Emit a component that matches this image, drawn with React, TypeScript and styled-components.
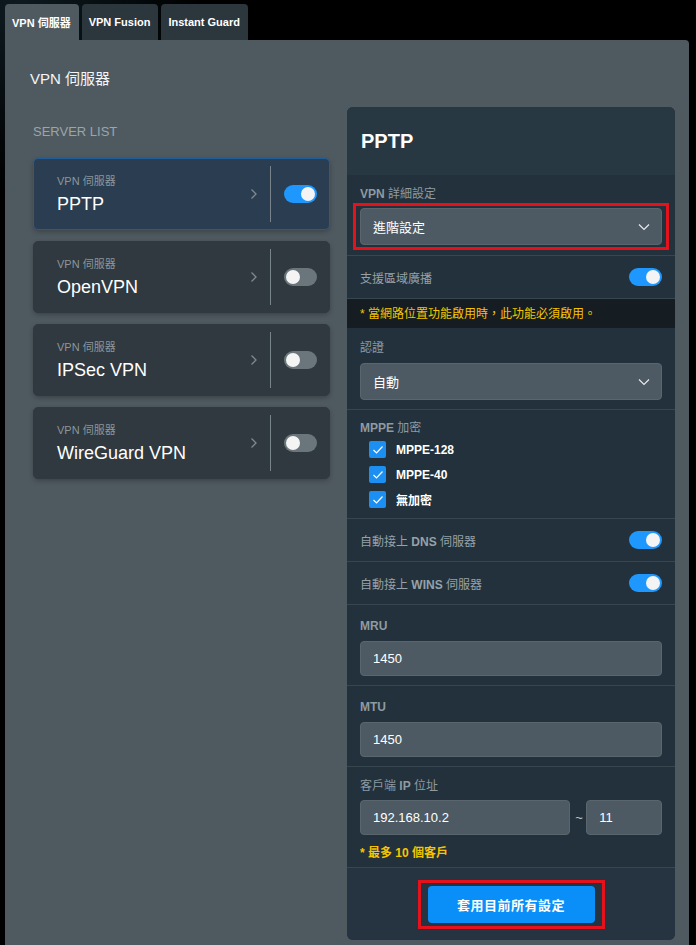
import React from "react";
import styled, { createGlobalStyle } from "styled-components";

const GlobalStyle = createGlobalStyle`
  html, body {
    margin: 0;
    padding: 0;
    background: #000;
  }
  body {
    font-family: "Liberation Sans", "Noto Sans CJK TC", sans-serif;
    color: #fff;
  }
  * {
    box-sizing: border-box;
  }
`;

const Page = styled.div`
  width: 696px;
  min-height: 945px;
  background: radial-gradient(circle at 20px 10px, #0d1a20 0, #000 180px);
  overflow: hidden;
`;

const TabBar = styled.div`
  display: flex;
  gap: 3px;
  padding: 4px 0 0 5px;
  height: 40px;
`;

const Tab = styled.div<{ $active?: boolean }>`
  height: 36px;
  display: flex;
  align-items: center;
  padding: 0 8px 0 7px;
  font-size: 11px;
  font-weight: bold;
  color: #fff;
  border-radius: 4px 4px 0 0;
  background: ${(p) => (p.$active ? "#4f5a60" : "#2c363d")};
`;

const Panel = styled.div`
  margin-left: 5px;
  width: 684px;
  min-height: 905px;
  background: #4f5a60;
  border-top-right-radius: 4px;
`;

const Title = styled.div`
  height: 67px;
  padding: 30px 0 0 25px;
  font-size: 15px;
  line-height: 18px;
  color: #f4f6f7;
`;

const Columns = styled.div`
  display: grid;
  grid-template-columns: 297px 328px;
  column-gap: 17px;
  padding-left: 28px;
  align-items: start;
`;

const ServerColumn = styled.div`
  display: flex;
  flex-direction: column;
  gap: 11px;
`;

const ListLabel = styled.div`
  margin-top: 17px;
  margin-bottom: 8px;
  font-size: 13px;
  line-height: 15px;
  color: #9ba5ab;
`;

const ServerCard = styled.div<{ $active?: boolean }>`
  height: 72px;
  display: flex;
  align-items: center;
  padding-left: 23px;
  border-radius: 5px;
  border: 1px solid ${(p) => (p.$active ? "#215e97" : "#30393f")};
  background: ${(p) => (p.$active ? "#2b3e51" : "#30393f")};
  box-shadow: 0 2px 5px rgba(0, 0, 0, 0.25);
`;

const ServerText = styled.div`
  flex: 1;
  display: flex;
  flex-direction: column;
  gap: 6px;
  padding-top: 1px;
`;

const ServerKind = styled.div`
  font-size: 11px;
  line-height: 13px;
  color: #8c969c;
`;

const ServerName = styled.div`
  font-size: 18px;
  line-height: 21px;
  color: #fff;
`;

const Chevron = styled.svg`
  width: 8px;
  height: 12px;
  margin-right: 12px;
`;

const Divider = styled.div`
  width: 1px;
  align-self: stretch;
  margin: 7px 13px 7px 0;
  background: #79838a;
`;

const Switch = styled.div<{ $on?: boolean }>`
  width: 33px;
  height: 18px;
  border-radius: 9px;
  flex-shrink: 0;
  display: flex;
  align-items: center;
  padding: 0 2px;
  justify-content: ${(p) => (p.$on ? "flex-end" : "flex-start")};
  background: ${(p) => (p.$on ? "#1e98ff" : "#6b767c")};
  &::after {
    content: "";
    width: 14px;
    height: 14px;
    border-radius: 50%;
    background: #f4f4f4;
  }
`;

const CardSwitch = styled(Switch)`
  margin-right: 12px;
`;

const Settings = styled.div`
  border-radius: 6px;
  background: #22313c;
  overflow: hidden;
  margin-bottom: 5px;
`;

const SettingsHeader = styled.div`
  height: 68px;
  display: flex;
  align-items: center;
  padding-left: 14px;
  font-size: 20px;
  font-weight: bold;
  color: #fff;
  background: #283843;
`;

const Section = styled.div<{ $pad?: string }>`
  padding: ${(p) => p.$pad || "11px 13px 9px"};
  border-bottom: 1px solid #38464f;
  display: flex;
  flex-direction: column;
`;

const FieldLabel = styled.div<{ $gap?: number }>`
  font-size: 12px;
  line-height: 14px;
  color: #8f9aa1;
  margin-bottom: ${(p) => (p.$gap ?? 8)}px;
`;

const Latin = styled.b`
  font-weight: bold;
`;

const Row = styled.div`
  height: 43px;
  display: flex;
  align-items: center;
  justify-content: space-between;
  padding: 0 13px;
  border-bottom: 1px solid #38464f;
`;

const RowLabel = styled.div`
  font-size: 12px;
  color: #97a1a8;
`;

const Note = styled.div<{ $bold?: boolean }>`
  font-size: 12px;
  line-height: 14px;
  font-weight: ${(p) => (p.$bold ? "bold" : "normal")};
  color: #f6c500;
`;

const NoteBand = styled.div`
  height: 29px;
  display: flex;
  align-items: center;
  padding: 0 13px;
  background: #151c22;
`;

const Highlight = styled.div<{ $x: number; $y: number }>`
  border: 3px solid #e5121c;
  padding: ${(p) => `${p.$y - 3}px ${p.$x - 3}px`};
  margin: ${(p) => `-${p.$y}px -${p.$x}px`};
`;

const SelectBox = styled.div`
  height: 37px;
  display: flex;
  align-items: center;
  justify-content: space-between;
  padding: 0 11px 0 12px;
  border-radius: 4px;
  border: 1px solid #5a666e;
  background: #4e5a63;
  font-size: 13px;
  color: #fff;
`;

const InputBox = styled.div<{ $w?: string }>`
  height: 35px;
  width: ${(p) => p.$w || "auto"};
  display: flex;
  align-items: center;
  padding: 0 12px;
  border-radius: 4px;
  border: 1px solid #5a666e;
  background: #4e5a63;
  font-size: 13px;
  color: #fff;
`;

const IpRow = styled.div`
  display: flex;
  align-items: center;
  gap: 5px;
  margin-bottom: 11px;
`;

const Tilde = styled.span`
  width: 6px;
  text-align: center;
  font-size: 13px;
  color: #c4cbd0;
`;

const Checks = styled.div`
  display: flex;
  flex-direction: column;
  gap: 8px;
  padding: 1px 0 0 9px;
`;

const CheckItem = styled.label`
  display: flex;
  align-items: center;
  gap: 10px;
  font-size: 12px;
  font-weight: bold;
  color: #fff;
`;

const CheckBox = styled.span`
  width: 17px;
  height: 17px;
  border-radius: 2px;
  background: #1b8ff2;
  display: flex;
  align-items: center;
  justify-content: center;
`;

const ApplyWrap = styled.div`
  display: flex;
  justify-content: center;
  padding: 18px 0 17px;
  background: #253440;
`;

const ApplyButton = styled.button`
  display: block;
  width: 167px;
  height: 37px;
  border: none;
  border-radius: 4px;
  background: #0a8ff8;
  color: #fff;
  font-family: inherit;
  font-size: 13px;
  font-weight: bold;
  letter-spacing: 0.5px;
`;

const ChevronRight = () => (
  <Chevron viewBox="0 0 8 12">
    <path d="M1.5 1.5 L6 6 L1.5 10.5" fill="none" stroke="#7f898f" strokeWidth="1.3" />
  </Chevron>
);

const ChevronDown = () => (
  <svg width="12" height="8" viewBox="0 0 12 8">
    <path d="M1 1.5 L6 6.5 L11 1.5" fill="none" stroke="#e6eaec" strokeWidth="1.2" />
  </svg>
);

const Tick = () => (
  <svg width="12" height="10" viewBox="0 0 12 10">
    <path d="M1.5 5 L4.5 8 L10.5 1.5" fill="none" stroke="#fff" strokeWidth="1.2" />
  </svg>
);

const servers = [
  { name: "PPTP", on: true },
  { name: "OpenVPN", on: false },
  { name: "IPSec VPN", on: false },
  { name: "WireGuard VPN", on: false },
];

const mppe = ["MPPE-128", "MPPE-40", "無加密"];

export default function App() {
  return (
    <Page>
      <GlobalStyle />
      <TabBar>
        <Tab $active>VPN 伺服器</Tab>
        <Tab>VPN Fusion</Tab>
        <Tab>Instant Guard</Tab>
      </TabBar>
      <Panel>
        <Title>VPN 伺服器</Title>
        <Columns>
          <ServerColumn>
            <ListLabel>SERVER LIST</ListLabel>
            {servers.map((s, i) => (
              <ServerCard key={s.name} $active={i === 0}>
                <ServerText>
                  <ServerKind>VPN 伺服器</ServerKind>
                  <ServerName>{s.name}</ServerName>
                </ServerText>
                <ChevronRight />
                <Divider />
                <CardSwitch $on={s.on} />
              </ServerCard>
            ))}
          </ServerColumn>

          <Settings>
            <SettingsHeader>PPTP</SettingsHeader>
            <Section $pad="12px 13px 10px">
              <FieldLabel $gap={7}>
                <Latin>VPN</Latin> 詳細設定
              </FieldLabel>
              <Highlight $x={7} $y={5}>
                <SelectBox>
                  進階設定
                  <ChevronDown />
                </SelectBox>
              </Highlight>
            </Section>
            <Row>
              <RowLabel>支援區域廣播</RowLabel>
              <Switch $on />
            </Row>
            <NoteBand>
              <Note>* 當網路位置功能啟用時，此功能必須啟用。</Note>
            </NoteBand>
            <Section $pad="13px 13px 9px">
              <FieldLabel>認證</FieldLabel>
              <SelectBox>
                自動
                <ChevronDown />
              </SelectBox>
            </Section>
            <Section $pad="11px 13px 10px">
              <FieldLabel $gap={5}>
                <Latin>MPPE</Latin> 加密
              </FieldLabel>
              <Checks>
                {mppe.map((m) => (
                  <CheckItem key={m}>
                    <CheckBox>
                      <Tick />
                    </CheckBox>
                    {m}
                  </CheckItem>
                ))}
              </Checks>
            </Section>
            <Row>
              <RowLabel>
                自動接上 <Latin>DNS</Latin> 伺服器
              </RowLabel>
              <Switch $on />
            </Row>
            <Row>
              <RowLabel>
                自動接上 <Latin>WINS</Latin> 伺服器
              </RowLabel>
              <Switch $on />
            </Row>
            <Section $pad="14px 13px 9px">
              <FieldLabel>
                <Latin>MRU</Latin>
              </FieldLabel>
              <InputBox>1450</InputBox>
            </Section>
            <Section $pad="14px 13px 9px">
              <FieldLabel>
                <Latin>MTU</Latin>
              </FieldLabel>
              <InputBox>1450</InputBox>
            </Section>
            <Section $pad="12px 13px 7px">
              <FieldLabel $gap={7}>
                客戶端 <Latin>IP</Latin> 位址
              </FieldLabel>
              <IpRow>
                <InputBox $w="211px">192.168.10.2</InputBox>
                <Tilde>~</Tilde>
                <InputBox $w="76px">11</InputBox>
              </IpRow>
              <Note $bold>* 最多 10 個客戶</Note>
            </Section>
            <ApplyWrap>
              <Highlight $x={10} $y={6}>
                <ApplyButton>套用目前所有設定</ApplyButton>
              </Highlight>
            </ApplyWrap>
          </Settings>
        </Columns>
      </Panel>
    </Page>
  );
}
